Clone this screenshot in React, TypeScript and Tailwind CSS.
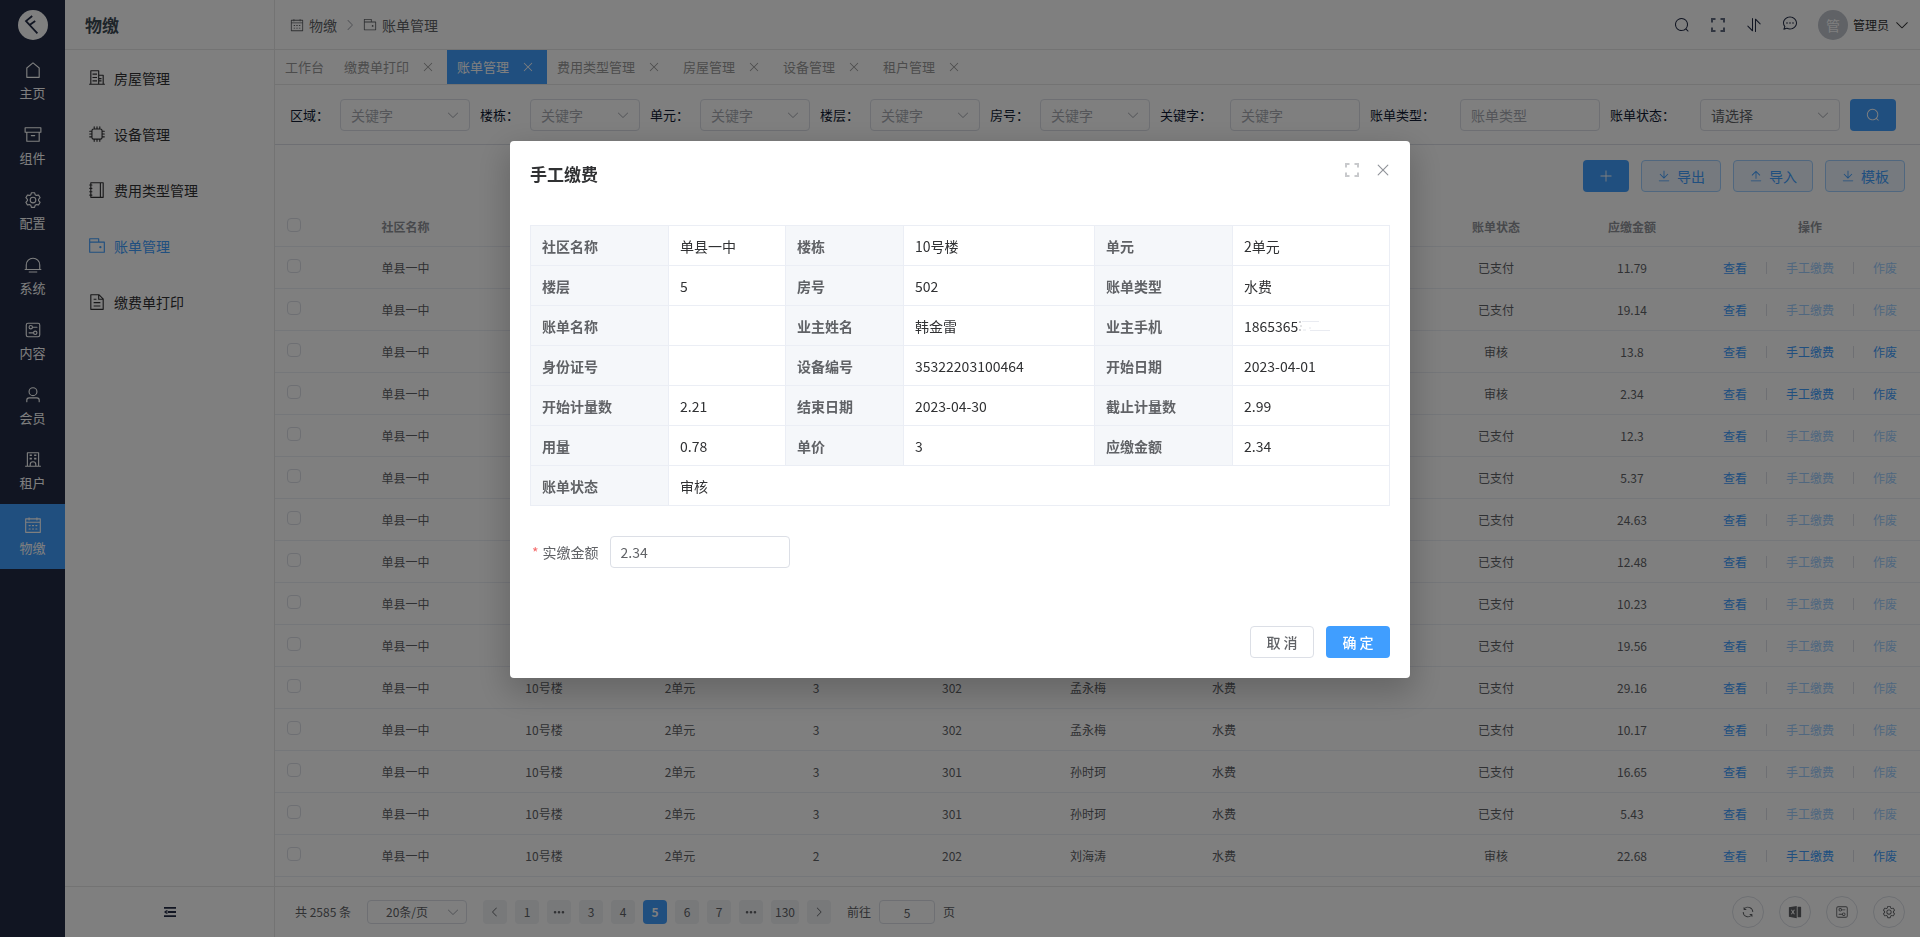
import { Fragment } from 'react'
import clsx from 'clsx'

// Icon outlines, all on a 1024 grid
const icons = {
  house:
    'M192 413.952V896h640V413.952L512 147.328 192 413.952zM139.52 374.4l352-293.312a32 32 0 0 1 40.96 0l352 293.312A32 32 0 0 1 896 398.976V928a32 32 0 0 1-32 32H160a32 32 0 0 1-32-32V398.976a32 32 0 0 1 11.52-24.576z',
  box: 'M832 384H192v448h640V384zM96 320h832V128H96v192zm800 64v480a32 32 0 0 1-32 32H160a32 32 0 0 1-32-32V384H64a32 32 0 0 1-32-32V96a32 32 0 0 1 32-32h896a32 32 0 0 1 32 32v256a32 32 0 0 1-32 32h-64zM416 512h192a32 32 0 0 1 0 64H416a32 32 0 0 1 0-64z',
  setting:
    'M600.704 64a32 32 0 0 1 30.464 22.208l35.2 109.376c14.784 7.232 28.928 15.36 42.432 24.512l112.384-24.192a32 32 0 0 1 34.432 15.36L944.32 364.8a32 32 0 0 1-4.032 37.504l-77.12 85.12a357.12 357.12 0 0 1 0 49.024l77.12 85.248a32 32 0 0 1 4.032 37.504l-88.704 153.6a32 32 0 0 1-34.432 15.296L708.8 803.904c-13.44 9.088-27.648 17.28-42.368 24.512l-35.264 109.376A32 32 0 0 1 600.704 960H423.296a32 32 0 0 1-30.464-22.208L357.696 828.48a351.616 351.616 0 0 1-42.56-24.64l-112.32 24.256a32 32 0 0 1-34.432-15.36L79.68 659.2a32 32 0 0 1 4.032-37.504l77.12-85.248a357.12 357.12 0 0 1 0-48.896l-77.12-85.248A32 32 0 0 1 79.68 364.8l88.704-153.6a32 32 0 0 1 34.432-15.296l112.32 24.256c13.568-9.152 27.776-17.408 42.56-24.64l35.2-109.312A32 32 0 0 1 423.232 64H600.64zm-23.424 64H446.72l-36.352 113.088-24.512 11.968a294.113 294.113 0 0 0-34.816 20.096l-22.656 15.36-116.224-25.088-65.28 113.152 79.68 88.192-1.92 27.136a293.12 293.12 0 0 0 0 40.192l1.92 27.136-79.808 88.192 65.344 113.152 116.224-25.024 22.656 15.296a294.113 294.113 0 0 0 34.816 20.096l24.512 11.968L446.72 896h130.688l36.48-113.152 24.448-11.904a288.282 288.282 0 0 0 34.752-20.096l22.592-15.296 116.288 25.024 65.28-113.152-79.744-88.192 1.92-27.136a293.12 293.12 0 0 0 0-40.256l-1.92-27.136 79.808-88.128-65.344-113.152-116.288 24.96-22.592-15.232a287.616 287.616 0 0 0-34.752-20.096l-24.448-11.904L577.344 128zM512 320a192 192 0 1 1 0 384 192 192 0 0 1 0-384zm0 64a128 128 0 1 0 0 256 128 128 0 0 0 0-256z',
  dome: 'M64 736h896q32 0 32 32t-32 32H64q-32 0-32-32t32-32zM272 880h480v64H272zM96 736V512a416 416 0 0 1 832 0v224h-64V512a352 352 0 0 0-704 0v224z',
  setUp:
    'M224 160a64 64 0 0 0-64 64v576a64 64 0 0 0 64 64h576a64 64 0 0 0 64-64V224a64 64 0 0 0-64-64H224zm0-64h576a128 128 0 0 1 128 128v576a128 128 0 0 1-128 128H224A128 128 0 0 1 96 800V224A128 128 0 0 1 224 96zM384 416a64 64 0 1 0 0-128 64 64 0 0 0 0 128zm0 64a128 128 0 1 1 0-256 128 128 0 0 1 0 256zM480 320h256q32 0 32 32t-32 32H480q-32 0-32-32t32-32zm160 416a64 64 0 1 0 0-128 64 64 0 0 0 0 128zm0 64a128 128 0 1 1 0-256 128 128 0 0 1 0 256zM288 640h256q32 0 32 32t-32 32H288q-32 0-32-32t32-32z',
  user: 'M512 512a192 192 0 1 0 0-384 192 192 0 0 0 0 384zm0 64a256 256 0 1 1 0-512 256 256 0 0 1 0 512zm320 320v-96a96 96 0 0 0-96-96H288a96 96 0 0 0-96 96v96a32 32 0 1 1-64 0v-96a160 160 0 0 1 160-160h448a160 160 0 0 1 160 160v96a32 32 0 1 1-64 0z',
  school:
    'M224 128v704h576V128H224zm-32-64h640a32 32 0 0 1 32 32v768a32 32 0 0 1-32 32H192a32 32 0 0 1-32-32V96a32 32 0 0 1 32-32zM64 832h896v64H64zm256-640h128v96H320zM384 832h256v-64a128 128 0 1 0-256 0v64zm128-256a192 192 0 0 1 192 192v128H320V768a192 192 0 0 1 192-192zM320 384h128v96H320zm256-192h128v96H576zm0 192h128v96H576z',
  calendar:
    'M128 384v512h768V192H768v32a32 32 0 1 1-64 0v-32H320v32a32 32 0 0 1-64 0v-32H128v128h768v64H128zm192-256h384V96a32 32 0 1 1 64 0v32h160a32 32 0 0 1 32 32v768a32 32 0 0 1-32 32H96a32 32 0 0 1-32-32V160a32 32 0 0 1 32-32h160V96a32 32 0 0 1 64 0v32zm-32 384h64a32 32 0 0 1 0 64h-64a32 32 0 0 1 0-64zm0 192h64a32 32 0 1 1 0 64h-64a32 32 0 1 1 0-64zm192-192h64a32 32 0 0 1 0 64h-64a32 32 0 0 1 0-64zm0 192h64a32 32 0 1 1 0 64h-64a32 32 0 1 1 0-64zm192-192h64a32 32 0 1 1 0 64h-64a32 32 0 1 1 0-64zm0 192h64a32 32 0 1 1 0 64h-64a32 32 0 1 1 0-64z',
  office:
    'M192 128v704h384V128H192zm-32-64h448a32 32 0 0 1 32 32v768a32 32 0 0 1-32 32H160a32 32 0 0 1-32-32V96a32 32 0 0 1 32-32zM256 256h256v64H256v-64zm0 192h256v64H256v-64zm0 192h256v64H256v-64zm384-128h128v64H640v-64zm0 128h128v64H640v-64zM64 832h896v64H64v-64zM640 384v448h192V384H640zm-32-64h256a32 32 0 0 1 32 32v512a32 32 0 0 1-32 32H608a32 32 0 0 1-32-32V352a32 32 0 0 1 32-32z',
  cpu: 'M320 256a64 64 0 0 0-64 64v384a64 64 0 0 0 64 64h384a64 64 0 0 0 64-64V320a64 64 0 0 0-64-64H320zm0-64h384a128 128 0 0 1 128 128v384a128 128 0 0 1-128 128H320a128 128 0 0 1-128-128V320a128 128 0 0 1 128-128zM512 64a32 32 0 0 1 32 32v128h-64V96a32 32 0 0 1 32-32zm160 0a32 32 0 0 1 32 32v128h-64V96a32 32 0 0 1 32-32zm-320 0a32 32 0 0 1 32 32v128h-64V96a32 32 0 0 1 32-32zm160 896a32 32 0 0 1-32-32V800h64v128a32 32 0 0 1-32 32zm160 0a32 32 0 0 1-32-32V800h64v128a32 32 0 0 1-32 32zm-320 0a32 32 0 0 1-32-32V800h64v128a32 32 0 0 1-32 32zM64 512a32 32 0 0 1 32-32h128v64H96a32 32 0 0 1-32-32zm0-160a32 32 0 0 1 32-32h128v64H96a32 32 0 0 1-32-32zm0 320a32 32 0 0 1 32-32h128v64H96a32 32 0 0 1-32-32zm896-160a32 32 0 0 1-32 32H800v-64h128a32 32 0 0 1 32 32zm0-160a32 32 0 0 1-32 32H800v-64h128a32 32 0 0 1 32 32zm0 320a32 32 0 0 1-32 32H800v-64h128a32 32 0 0 1 32 32z',
  notebook:
    'M192 128v768h640V128H192zm-32-64h704a32 32 0 0 1 32 32v832a32 32 0 0 1-32 32H160a32 32 0 0 1-32-32V96a32 32 0 0 1 32-32zM672 128h64v768h-64zM96 192h128q32 0 32 32t-32 32H96q-32 0-32-32t32-32zm0 192h128q32 0 32 32t-32 32H96q-32 0-32-32t32-32zm0 192h128q32 0 32 32t-32 32H96q-32 0-32-32t32-32zm0 192h128q32 0 32 32t-32 32H96q-32 0-32-32t32-32z',
  wallet:
    'M640 288h-64V128H128v704h384v32a32 32 0 0 0 32 32H96a32 32 0 0 1-32-32V96a32 32 0 0 1 32-32h512a32 32 0 0 1 32 32v192zM128 320v512h768V320H128zm-32-64h832a32 32 0 0 1 32 32v576a32 32 0 0 1-32 32H96a32 32 0 0 1-32-32V288a32 32 0 0 1 32-32zM704 640a64 64 0 1 1 0-128 64 64 0 0 1 0 128z',
  document:
    'M832 384H576V128H192v768h640V384zm-26.496-64L640 154.496V320h165.504zM160 64h480l256 256v608a32 32 0 0 1-32 32H160a32 32 0 0 1-32-32V96a32 32 0 0 1 32-32zm160 448h384v64H320v-64zm0-192h160v64H320v-64zm0 384h384v64H320v-64z',
  search:
    'm795.904 750.72 124.992 124.928a32 32 0 0 1-45.248 45.248L750.656 795.904a416 416 0 1 1 45.248-45.248zM480 832a352 352 0 1 0 0-704 352 352 0 0 0 0 704z',
  fullscreen:
    'M64 64h288v128H192v160H64zM672 64h288v288H832V192H672zM64 672h128v160h160v128H64zM832 672h128v288H672V832h160z',
  sort: 'M384 96a32 32 0 0 1 64 0v786.752a32 32 0 0 1-54.592 22.656L95.936 608a32 32 0 0 1 0-45.312h.128a32 32 0 0 1 45.184 0L384 805.632V96zm192 45.248a32 32 0 0 1 54.592-22.592L928.064 416a32 32 0 0 1 0 45.312h-.128a32 32 0 0 1-45.184 0L640 218.496V928a32 32 0 1 1-64 0V141.248z',
  chat: 'm174.72 855.68 135.296-45.12 23.68 11.84C388.096 849.536 448.576 864 512 864c211.84 0 384-166.784 384-352S723.84 160 512 160 128 326.784 128 512c0 69.12 24.96 139.264 70.848 199.232l22.08 28.8-46.272 115.584zm-45.248 82.56A32 32 0 0 1 89.6 896l58.368-145.92C94.72 680.32 64 596.864 64 512 64 299.904 256 96 512 96s448 203.904 448 416-192 416-448 416a461.056 461.056 0 0 1-206.912-48.384l-175.616 58.56zM512 563.2a51.2 51.2 0 1 1 0-102.4 51.2 51.2 0 0 1 0 102.4zm192 0a51.2 51.2 0 1 1 0-102.4 51.2 51.2 0 0 1 0 102.4zm-384 0a51.2 51.2 0 1 1 0-102.4 51.2 51.2 0 0 1 0 102.4z',
  arrowDown:
    'M831.872 340.864 512 652.672 192.128 340.864a30.592 30.592 0 0 0-42.752 0 29.12 29.12 0 0 0 0 41.6L489.664 714.24a32 32 0 0 0 44.672 0l340.288-331.712a29.12 29.12 0 0 0 0-41.728 30.592 30.592 0 0 0-42.752 0z',
  arrowRight:
    'M340.864 149.312a30.592 30.592 0 0 0 0 42.752L652.736 512 340.864 831.872a30.592 30.592 0 0 0 0 42.752 29.12 29.12 0 0 0 41.728 0L714.24 534.336a32 32 0 0 0 0-44.672L382.592 149.376a29.12 29.12 0 0 0-41.728 0z',
  arrowLeft:
    'M609.408 149.376 277.76 489.6a32 32 0 0 0 0 44.672l331.648 340.352a29.12 29.12 0 0 0 41.728 0 30.592 30.592 0 0 0 0-42.752L339.264 511.936l311.872-319.872a30.592 30.592 0 0 0 0-42.688 29.12 29.12 0 0 0-41.728 0z',
  close:
    'M764.288 214.592 512 466.88 259.712 214.592a31.936 31.936 0 0 0-45.12 45.12L466.752 512 214.528 764.224a31.936 31.936 0 1 0 45.12 45.184L512 557.184l252.288 252.288a31.936 31.936 0 0 0 45.12-45.12L557.12 512.064l252.288-252.352a31.936 31.936 0 1 0-45.12-45.184z',
  plus: 'M480 480V128a32 32 0 0 1 64 0v352h352a32 32 0 1 1 0 64H544v352a32 32 0 1 1-64 0V544H128a32 32 0 0 1 0-64h352z',
  download:
    'M160 832h704a32 32 0 1 1 0 64H160a32 32 0 1 1 0-64zm384-253.696 236.288-236.352 45.248 45.248L508.8 704 192 387.2l45.248-45.248L480 584.704V128h64v450.304z',
  upload:
    'M160 832h704a32 32 0 1 1 0 64H160a32 32 0 1 1 0-64zm384-578.304V704h-64V247.296L237.248 490.048 192 444.8 508.8 128l316.8 316.8-45.312 45.248L544 253.696z',
  more: 'M176 416a112 112 0 1 1 0 224 112 112 0 0 1 0-224zm336 0a112 112 0 1 1 0 224 112 112 0 0 1 0-224zm336 0a112 112 0 1 1 0 224 112 112 0 0 1 0-224z',
  refresh:
    'M771.776 794.88A384 384 0 0 1 128 512h64a320 320 0 0 0 555.712 216.448H654.72a32 32 0 1 1 0-64h149.056a32 32 0 0 1 32 32v148.928a32 32 0 1 1-64 0v-50.56zM276.288 295.616h92.992a32 32 0 0 1 0 64H220.16a32 32 0 0 1-32-32V178.56a32 32 0 0 1 64 0v50.56A384 384 0 0 1 896.128 512h-64a320 320 0 0 0-555.776-216.384z',
  excel:
    'M64 160 640 64v896L64 864zM208 352l108 160-108 160h84l66-104 66 104h84L400 512l108-160h-84l-66 104-66-104zM704 128h224a32 32 0 0 1 32 32v704a32 32 0 0 1-32 32H704z',
  fold: 'M0 85h1024v154H0zM341 435h683v154H341zM0 785h1024v154H0zM0 512l190-150v300zM210 350h80v324h-80z',
}

type IconName = keyof typeof icons

function Icon({ name, className }: { name: IconName; className?: string }) {
  return (
    <svg viewBox="0 0 1024 1024" fill="currentColor" className={clsx('shrink-0', className)} aria-hidden="true">
      <path d={icons[name]} />
    </svg>
  )
}

const mainMenu: { icon: IconName; label: string }[] = [
  { icon: 'house', label: '主页' },
  { icon: 'box', label: '组件' },
  { icon: 'setting', label: '配置' },
  { icon: 'dome', label: '系统' },
  { icon: 'setUp', label: '内容' },
  { icon: 'user', label: '会员' },
  { icon: 'school', label: '租户' },
  { icon: 'calendar', label: '物缴' },
]

const subMenu: { icon: IconName; label: string }[] = [
  { icon: 'office', label: '房屋管理' },
  { icon: 'cpu', label: '设备管理' },
  { icon: 'notebook', label: '费用类型管理' },
  { icon: 'wallet', label: '账单管理' },
  { icon: 'document', label: '缴费单打印' },
]

const tabs = ['工作台', '缴费单打印', '账单管理', '费用类型管理', '房屋管理', '设备管理', '租户管理']

const filters = [
  { id: 'area', label: '区域', text: '关键字', type: 'select', labelWidth: 'w-[50px]', width: 'w-[130px]' },
  { id: 'building', label: '楼栋', text: '关键字', type: 'select', labelWidth: 'w-[50px]', width: 'w-[110px]' },
  { id: 'unit', label: '单元', text: '关键字', type: 'select', labelWidth: 'w-[50px]', width: 'w-[110px]' },
  { id: 'floor', label: '楼层', text: '关键字', type: 'select', labelWidth: 'w-[50px]', width: 'w-[110px]' },
  { id: 'room', label: '房号', text: '关键字', type: 'select', labelWidth: 'w-[50px]', width: 'w-[110px]' },
  { id: 'keyword', label: '关键字', text: '关键字', type: 'input', labelWidth: 'w-[70px]', width: 'w-[130px]' },
  { id: 'billType', label: '账单类型', text: '账单类型', type: 'input', labelWidth: 'w-[90px]', width: 'w-[140px]' },
  { id: 'billStatus', label: '账单状态', text: '请选择', type: 'select', labelWidth: 'w-[90px]', width: 'w-[140px]' },
]

interface Bill {
  amount: string
  pending?: boolean
  floor?: string
  room?: string
  owner?: string
}

const bills: Bill[] = [
  { amount: '11.79' },
  { amount: '19.14' },
  { amount: '13.8', pending: true },
  { amount: '2.34', pending: true, floor: '5', room: '502', owner: '韩金雷' },
  { amount: '12.3' },
  { amount: '5.37' },
  { amount: '24.63' },
  { amount: '12.48' },
  { amount: '10.23' },
  { amount: '19.56' },
  { amount: '29.16', floor: '3', room: '302', owner: '孟永梅' },
  { amount: '10.17', floor: '3', room: '302', owner: '孟永梅' },
  { amount: '16.65', floor: '3', room: '301', owner: '孙时珂' },
  { amount: '5.43', floor: '3', room: '301', owner: '孙时珂' },
  { amount: '22.68', pending: true, floor: '2', room: '202', owner: '刘海涛' },
]

const columns = ['社区名称', '楼栋', '单元', '楼层', '房号', '业主姓名', '账单类型', '账单名称', '账单状态', '应缴金额']

const details = [
  ['社区名称', '单县一中', '楼栋', '10号楼', '单元', '2单元'],
  ['楼层', '5', '房号', '502', '账单类型', '水费'],
  ['账单名称', '', '业主姓名', '韩金雷', '业主手机', '1865365'],
  ['身份证号', '', '设备编号', '35322203100464', '开始日期', '2023-04-01'],
  ['开始计量数', '2.21', '结束日期', '2023-04-30', '截止计量数', '2.99'],
  ['用量', '0.78', '单价', '3', '应缴金额', '2.34'],
  ['账单状态', '审核'],
]

const pages = ['1', 'more', '3', '4', '5', '6', '7', 'more', '130']

function Logo() {
  return (
    <svg viewBox="0 0 30 30" className="size-[30px]" aria-hidden="true">
      <circle cx="15" cy="15" r="15" fill="#fff" />
      <path d="M14.2 6 8 11l11.4 12.4M11.6 15l5.6-4" fill="none" stroke="#222b45" strokeWidth="1.8" />
    </svg>
  )
}

function MainAside() {
  return (
    <aside className="w-[65px] shrink-0 bg-[#222b45] text-white">
      <div className="flex h-[49px] items-center justify-center pl-px pt-px">
        <Logo />
      </div>
      <nav>
        {mainMenu.map((item) => (
          <a
            key={item.label}
            href="#"
            className={clsx(
              'flex h-[65px] flex-col items-center justify-center gap-1 text-[13px] leading-5',
              item.label === '物缴' && 'bg-[#409eff]',
            )}
          >
            <Icon name={item.icon} className="size-[18px]" />
            {item.label}
          </a>
        ))}
      </nav>
    </aside>
  )
}

function SubAside() {
  return (
    <aside className="flex w-[210px] shrink-0 flex-col border-r border-[#e6e6e6]">
      <h2 className="flex h-[50px] items-center border-b border-[#e6e6e6] px-5 text-[17px] font-bold text-[#3c4a54]">物缴</h2>
      <nav className="flex-1">
        {subMenu.map((item) => (
          <a
            key={item.label}
            href="#"
            className={clsx(
              'flex h-14 items-center gap-[5px] px-5 text-sm',
              item.label === '账单管理' ? 'text-[#409eff]' : 'text-[#303133]',
            )}
          >
            <span className="flex w-6 justify-center">
              <Icon name={item.icon} className="size-[18px]" />
            </span>
            {item.label}
          </a>
        ))}
      </nav>
      <button aria-label="收起菜单" className="flex h-[51px] items-center justify-center border-t border-[#e6e6e6] text-[#222b45]">
        <Icon name="fold" className="size-3" />
      </button>
    </aside>
  )
}

function TopBar() {
  return (
    <header className="flex h-[50px] items-center justify-between border-b border-[#e6e6e6] pl-[15px] pr-2.5">
      <nav className="flex items-center text-sm text-[#606266]">
        <a href="#" className="flex items-center gap-[5px]">
          <Icon name="calendar" className="size-3.5" />
          物缴
        </a>
        <Icon name="arrowRight" className="mx-1.5 size-3.5 text-[#a8abb2]" />
        <a href="#" className="flex items-center gap-[5px]">
          <Icon name="wallet" className="size-3.5" />
          账单管理
        </a>
      </nav>
      <div className="flex items-center text-[#222b45]">
        <div className="flex items-center gap-5">
          <button aria-label="搜索">
            <Icon name="search" className="size-4" />
          </button>
          <button aria-label="全屏" className="text-[#606a80]">
            <Icon name="fullscreen" className="size-4" />
          </button>
          <button aria-label="任务">
            <Icon name="sort" className="size-4" />
          </button>
          <button aria-label="消息">
            <Icon name="chat" className="mb-1 size-4" />
          </button>
        </div>
        <button className="ml-5 flex items-center gap-[5px] text-xs text-[#303133]">
          <span className="flex size-[30px] items-center justify-center rounded-full bg-[#c0c4cc] text-sm text-white">管</span>
          管理员
          <Icon name="arrowDown" className="size-4" />
        </button>
      </div>
    </header>
  )
}

function TabBar() {
  return (
    <div className="flex h-[35px] border-b border-[#e6e6e6] text-[13px] text-[#999]">
      {tabs.map((tab) => (
        <div key={tab} className={clsx('flex items-center px-2.5', tab === '账单管理' && 'bg-[#409eff] text-white')}>
          <a href="#">{tab}</a>
          {tab !== '工作台' && (
            <button aria-label={`关闭${tab}`} className="ml-3 mr-0.5">
              <Icon name="close" className="size-3.5" />
            </button>
          )}
        </div>
      ))}
    </div>
  )
}

function FilterBar() {
  return (
    <form className="flex h-[60px] items-center gap-2.5 border-b border-[#dcdfe6] px-[15px]">
      {filters.map((f) => (
        <div key={f.id} className="flex items-center">
          <label htmlFor={f.id} className={clsx('text-[13px] text-[#101a33]', f.labelWidth)}>
            {f.label}：
          </label>
          {f.type === 'select' ? (
            <div className={clsx('relative', f.width)}>
              <select
                id={f.id}
                className={clsx(
                  'h-8 w-full appearance-none rounded border border-[#dcdfe6] bg-white px-2.5 text-sm',
                  f.id === 'billStatus' ? 'text-[#606266]' : 'text-[#a8abb2]',
                )}
              >
                <option>{f.text}</option>
              </select>
              <Icon name="arrowDown" className="pointer-events-none absolute right-2.5 top-[9px] size-3.5 text-[#a8abb2]" />
            </div>
          ) : (
            <input
              id={f.id}
              placeholder={f.text}
              className={clsx('h-8 rounded border border-[#dcdfe6] px-2.5 text-sm placeholder:text-[#a8abb2]', f.width)}
            />
          )}
        </div>
      ))}
      <button type="button" aria-label="查询" className="flex h-8 w-[46px] items-center justify-center rounded bg-[#409eff] text-white">
        <Icon name="search" className="size-3.5" />
      </button>
    </form>
  )
}

function ToolButton({ icon, label }: { icon: IconName; label: string }) {
  return (
    <button className="flex h-8 items-center gap-1.5 rounded border border-[#a0cfff] bg-[#ecf5ff] px-[15px] text-sm text-[#409eff]">
      <Icon name={icon} className="size-3.5" />
      {label}
    </button>
  )
}

function Checkbox({ label }: { label: string }) {
  return (
    <input
      type="checkbox"
      aria-label={label}
      className="mb-1 block size-3.5 appearance-none rounded-sm border border-[#dcdfe6] bg-white"
    />
  )
}

function RowActions({ pending }: { pending?: boolean }) {
  return (
    <div className="flex items-center justify-center">
      <button className="text-[#409eff]">查看</button>
      {['手工缴费', '作废'].map((action) => (
        <Fragment key={action}>
          <span className="mx-[19px] h-3 w-px bg-[#dcdfe6]" />
          <button disabled={!pending} className="text-[#409eff] disabled:text-[#a0cfff]">
            {action}
          </button>
        </Fragment>
      ))}
    </div>
  )
}

function BillTable() {
  return (
    <table className="w-full table-fixed border-separate border-spacing-0 text-center text-xs text-[#606266]">
      <colgroup>
        <col className="w-[60px]" />
        <col className="w-[141px]" />
        {columns.slice(1).map((c) => (
          <col key={c} />
        ))}
        <col className="w-[220px]" />
      </colgroup>
      <thead>
        <tr className="h-10 text-[#909399] [&>th]:border-b [&>th]:border-[#ebeef5]">
          <th className="pl-3">
            <Checkbox label="全选" />
          </th>
          {columns.map((c) => (
            <th key={c} className="font-bold">
              {c}
            </th>
          ))}
          <th className="font-bold">操作</th>
        </tr>
      </thead>
      <tbody>
        {bills.map((bill) => (
          <tr key={bill.amount} className="h-[42px] [&>td]:border-b [&>td]:border-[#ebeef5]">
            <td className="pl-3">
              <Checkbox label={`选择 ${bill.amount}`} />
            </td>
            <td>单县一中</td>
            <td>10号楼</td>
            <td>2单元</td>
            <td>{bill.floor}</td>
            <td>{bill.room}</td>
            <td>{bill.owner}</td>
            <td>水费</td>
            <td />
            <td>{bill.pending ? '审核' : '已支付'}</td>
            <td>{bill.amount}</td>
            <td>
              <RowActions pending={bill.pending} />
            </td>
          </tr>
        ))}
      </tbody>
    </table>
  )
}

function Pagination() {
  return (
    <footer className="mt-auto flex h-[51px] items-center justify-between border-t border-[#e6e6e6] pl-5 pr-[15px] text-xs text-[#606266]">
      <div className="flex items-center">
        <span>共 2585 条</span>
        <div className="relative ml-4 w-[100px]">
          <select aria-label="每页条数" className="h-6 w-full appearance-none rounded border border-[#dcdfe6] bg-white pl-[18px] text-xs">
            <option>20条/页</option>
          </select>
          <Icon name="arrowDown" className="pointer-events-none absolute right-[7px] top-[5px] size-3.5 text-[#a8abb2]" />
        </div>
        <div className="ml-4 flex gap-2">
          <button aria-label="上一页" className="flex size-6 items-center justify-center rounded-sm bg-[#f0f2f5]">
            <Icon name="arrowLeft" className="size-3" />
          </button>
          {pages.map((page, i) => (
            <button
              key={i}
              aria-label={page === 'more' ? '更多页' : page}
              className={clsx(
                'flex h-6 min-w-6 items-center justify-center rounded-sm px-1',
                page === '5' ? 'bg-[#409eff] font-bold text-white' : 'bg-[#f0f2f5]',
              )}
            >
              {page === 'more' ? <Icon name="more" className="size-3" /> : page}
            </button>
          ))}
          <button aria-label="下一页" className="flex size-6 items-center justify-center rounded-sm bg-[#f0f2f5]">
            <Icon name="arrowRight" className="size-3" />
          </button>
        </div>
        <label htmlFor="jump" className="ml-4">
          前往
        </label>
        <input id="jump" defaultValue="5" className="mx-2 h-6 w-14 rounded border border-[#dcdfe6] text-center text-xs" />
        <span>页</span>
      </div>
      <div className="flex gap-[15px]">
        {(['refresh', 'excel', 'setUp', 'setting'] as IconName[]).map((name) => (
          <button key={name} aria-label={name} className="flex size-8 items-center justify-center rounded-full border border-[#dcdfe6]">
            <Icon name={name} className="size-3.5" />
          </button>
        ))}
      </div>
    </footer>
  )
}

function PayDialog() {
  return (
    <div className="fixed inset-0 z-10 flex items-start justify-center bg-black/50 pt-[141px]">
      <div
        role="dialog"
        aria-labelledby="pay-title"
        className="w-[900px] rounded-sm bg-white text-sm text-[#606266] shadow-[0_12px_32px_4px_rgba(0,0,0,0.2)]"
      >
        <div className="flex items-start justify-between pl-5 pr-[18px] pt-5">
          <h3 id="pay-title" className="text-[17px] font-bold leading-[26px] text-[#303133]">
            手工缴费
          </h3>
          <div className="flex items-center gap-3.5">
            <button aria-label="全屏" className="text-[#c8c9cc]">
              <Icon name="fullscreen" className="size-4" />
            </button>
            <button aria-label="关闭" className="text-[#909399]">
              <Icon name="close" className="size-[18px]" />
            </button>
          </div>
        </div>
        <div className="px-5 pt-[38px]">
          <table className="w-full table-fixed border-collapse text-left">
            <colgroup>
              <col className="w-[138px]" />
              <col className="w-[117px]" />
              <col className="w-[118px]" />
              <col className="w-[191px]" />
              <col className="w-[138px]" />
              <col />
            </colgroup>
            <tbody>
              {details.map((row) => (
                <tr key={row[0]} className="h-10">
                  {row.map((cell, i) =>
                    i % 2 === 0 ? (
                      <th key={i} className="border border-[#ebeef5] bg-[#f5f7fa] px-[11px] font-bold">
                        {cell}
                      </th>
                    ) : (
                      <td key={i} colSpan={row.length === 2 ? 5 : 1} className="border border-[#ebeef5] px-[11px] text-[#303133]">
                        {row[i - 1] === '业主手机' ? (
                          <span className="flex items-center">
                            {cell}
                            <PhoneMask />
                          </span>
                        ) : (
                          cell
                        )}
                      </td>
                    ),
                  )}
                </tr>
              ))}
            </tbody>
          </table>
          <div className="mt-[30px] flex items-center">
            <label htmlFor="paid" className="pl-0.5">
              <span className="mr-1 text-[#f56c6c]">*</span>
              实缴金额
            </label>
            <input id="paid" defaultValue="2.34" className="ml-[11px] h-8 w-[180px] rounded border border-[#dcdfe6] px-2.5" />
          </div>
        </div>
        <div className="flex justify-end gap-3 px-5 pb-5 pt-[58px]">
          <button className="h-8 w-16 rounded border border-[#dcdfe6] font-medium">取 消</button>
          <button className="h-8 w-16 rounded bg-[#409eff] font-medium text-white">确 定</button>
        </div>
      </div>
    </div>
  )
}

// Wiped-out tail of the owner's phone number
function PhoneMask() {
  return (
    <svg viewBox="0 0 34 14" className="h-3.5 w-[34px]" fill="none" aria-hidden="true">
      <path d="M1 3h2M1 11h2" stroke="#9a9ba0" />
      <path d="M2 7h2" stroke="#c8c9cc" />
      <path d="M4 2.500h17M12 11.500h20" stroke="#e9ebf1" />
      <path d="M5 11h3M11 9h2" stroke="#e4e6ec" />
    </svg>
  )
}

export default function App() {
  return (
    <div className="flex min-h-screen bg-white font-['Noto_Sans_CJK_SC',sans-serif]">
      <MainAside />
      <SubAside />
      <main className="flex min-w-0 flex-1 flex-col">
        <TopBar />
        <TabBar />
        <FilterBar />
        <div className="flex justify-end gap-3 p-[15px]">
          <button aria-label="新增" className="flex h-8 w-[46px] items-center justify-center rounded bg-[#409eff] text-white">
            <Icon name="plus" className="size-3.5" />
          </button>
          <ToolButton icon="download" label="导出" />
          <ToolButton icon="upload" label="导入" />
          <ToolButton icon="download" label="模板" />
        </div>
        <BillTable />
        <Pagination />
      </main>
      <PayDialog />
    </div>
  )
}
